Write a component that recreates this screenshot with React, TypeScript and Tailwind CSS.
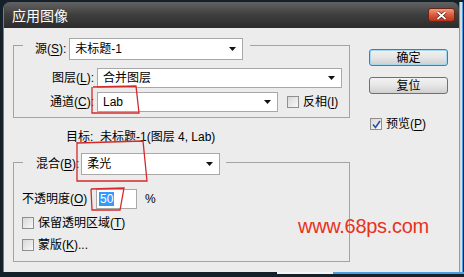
import React from "react";

const FONT = { fontFamily: '"Liberation Sans","Noto Sans CJK SC",sans-serif' };

function U({ c }: { c: string }) {
  return <span className="underline underline-offset-[2px]">{c}</span>;
}

function Arrow() {
  return (
    <svg width="7" height="4" viewBox="0 0 7 4" className="shrink-0">
      <path d="M0 0 L7 0 L3.5 4 Z" fill="#111" />
    </svg>
  );
}

function Select({ w, h, text }: { w: string; h: string; text: string }) {
  return (
    <div
      className={`${w} ${h} shrink-0 bg-white border border-[#a8a8a8] flex items-center justify-between pl-[5px] pr-[6px] text-[12px] text-black`}
    >
      <span>{text}</span>
      <Arrow />
    </div>
  );
}

function Check({ checked }: { checked?: boolean }) {
  return (
    <div className="w-[12px] h-[12px] shrink-0 border border-[#8f8f8f] bg-gradient-to-br from-[#d8d8d8] to-[#f8f8f8] flex items-center justify-center">
      {checked && (
        <svg width="9" height="9" viewBox="0 0 9 9">
          <path d="M1 4.5 L3.5 7.5 L8 1" stroke="#2b4fa8" strokeWidth="1.6" fill="none" />
        </svg>
      )}
    </div>
  );
}

export default function App() {
  return (
    <div
      className="relative w-[464px] h-[277px] overflow-hidden bg-[#14202a] flex flex-col pt-[2px] pl-[3px]"
      style={FONT}
    >
      <div className="flex">
        <div className="w-[456px] h-[270px] flex flex-col rounded-t-[7px] overflow-hidden border-l border-[#7c7c7c]">
          {/* title bar */}
          <div className="h-[26px] shrink-0 bg-gradient-to-b from-[#626262] via-[#3e3e3e] to-[#2c2c2c] flex items-start justify-between pl-[8px] pr-[4px] pt-[6px]">
            <span className="text-white text-[14px] leading-[16px]">应用图像</span>
            <div className="w-[27px] h-[14px] rounded-[3px] border border-[#6e2414] bg-gradient-to-b from-[#f09a80] via-[#d95a3c] to-[#b8341a] flex items-center justify-center">
              <svg width="11" height="9" viewBox="0 0 11 9">
                <path d="M1.5 1 L9.5 8 M9.5 1 L1.5 8" stroke="#5a1a10" strokeWidth="3.2" />
                <path d="M1.5 1 L9.5 8 M9.5 1 L1.5 8" stroke="#ffffff" strokeWidth="1.8" />
              </svg>
            </div>
          </div>
          {/* body */}
          <div className="flex-1 bg-[#ececec] flex pl-[9px] text-[12px] text-black whitespace-nowrap">
            {/* left column */}
            <div className="w-[337px] flex flex-col">
              <fieldset className="mt-[10px] border border-[#a3a3a3] p-0 m-0">
                <legend className="ml-[9px] h-[14px] flex items-start pl-[12px] pr-[7px] gap-[3px]">
                  <span className="h-[22px] flex items-center">
                    源(<U c="S" />):
                  </span>
                  <Select w="w-[174px]" h="h-[22px]" text="未标题-1" />
                </legend>
                <div className="pt-[16px] pb-[5px] flex flex-col gap-[4px]">
                  <div className="flex items-center">
                    <span className="w-[80px] text-right">
                      图层(<U c="L" />):
                    </span>
                    <div className="ml-[3px]">
                      <Select w="w-[245px]" h="h-[20px]" text="合并图层" />
                    </div>
                  </div>
                  <div className="flex items-center">
                    <span className="w-[80px] text-right">
                      通道(<U c="C" />):
                    </span>
                    <div className="ml-[3px]">
                      <Select w="w-[181px]" h="h-[20px]" text="Lab" />
                    </div>
                    <div className="ml-[9px] flex items-center gap-[4px]">
                      <Check />
                      <span>
                        反相(<U c="I" />)
                      </span>
                    </div>
                  </div>
                </div>
              </fieldset>
              <div className="h-[35px] flex items-center pl-[53px] pt-[3px]">
                目标:&nbsp;&nbsp;未标题-1(图层 4, Lab)
              </div>
              <fieldset className="border border-[#a3a3a3] p-0 m-0">
                <legend className="ml-[9px] h-[18px] flex items-start pl-[13px] pr-[6px] gap-[2px]">
                  <span className="h-[22px] flex items-center">
                    混合(<U c="B" />):
                  </span>
                  <Select w="w-[139px]" h="h-[22px]" text="柔光" />
                </legend>
                <div className="pt-[18px] pb-[10px] pl-[8px] flex flex-col">
                  <div className="flex items-center h-[20px]">
                    <span className="w-[67px] shrink-0">
                      不透明度(<U c="O" />)
                    </span>
                    <div className="ml-[7px] w-[41px] h-[20px] shrink-0 bg-white border border-[#a8a8a8] flex items-center pl-[2px]">
                      <span className="bg-[#3399ff] text-white px-[1px] leading-[14px]">50</span>
                    </div>
                    <span className="ml-[8px]">%</span>
                  </div>
                  <div className="mt-[8px] flex items-center gap-[4px] h-[12px]">
                    <Check />
                    <span>
                      保留透明区域(<U c="T" />)
                    </span>
                  </div>
                  <div className="mt-[10px] flex items-center gap-[4px] h-[12px]">
                    <Check />
                    <span>
                      蒙版(<U c="K" />)...
                    </span>
                  </div>
                </div>
              </fieldset>
            </div>
            {/* right column */}
            <div className="ml-[19px] w-[79px] flex flex-col">
              <div className="mt-[21px] h-[17px] rounded-[3px] border border-[#3c7fb1] bg-gradient-to-b from-[#f2f2f2] via-[#e6e6e6] to-[#cfcfcf] shadow-[inset_0_0_0_1px_#a8d8f0] flex items-center justify-center">
                确定
              </div>
              <div className="mt-[11px] h-[17px] rounded-[3px] border border-[#707070] bg-gradient-to-b from-[#f2f2f2] via-[#e6e6e6] to-[#cfcfcf] flex items-center justify-center">
                复位
              </div>
              <div className="mt-[21px] flex items-center gap-[4px] pl-[1px]">
                <Check checked />
                <span>
                  预览(<U c="P" />)
                </span>
              </div>
            </div>
          </div>
        </div>
        <div className="w-[5px] h-[270px] flex">
          <div className="w-[1px] bg-[#5aa9dc]" />
          <div className="w-[2px] bg-[#dcdcdc]" />
          <div className="w-[1px] bg-[#4aa0e0]" />
        </div>
      </div>
      <div className="flex-1 flex">
        <div className="w-[274px]" />
        <div className="w-[56px] h-[2px] bg-[#f4f4f4]" />
        <div className="flex-1 h-[2px] bg-[#4a9fe0]" />
      </div>

      {/* watermark */}
      <div className="absolute left-[298px] top-[214px] text-[20px] text-[#e8321c] tracking-[-0.3px] leading-[24px]">
        www.68ps.com
      </div>

      {/* red annotations */}
      <svg className="absolute left-0 top-0 pointer-events-none" width="464" height="277">
        <g stroke="#d42a2a" strokeWidth="1.3" fill="none">
          <path d="M93 87 L136 86 L139 113 L92 113 L92 87" />
          <path d="M77 143 L143 141 L147 181 L77 181 L77 142" />
          <path d="M91 189 L124 188 L120 210 L92 210 L91 189" />
        </g>
      </svg>
    </div>
  );
}
